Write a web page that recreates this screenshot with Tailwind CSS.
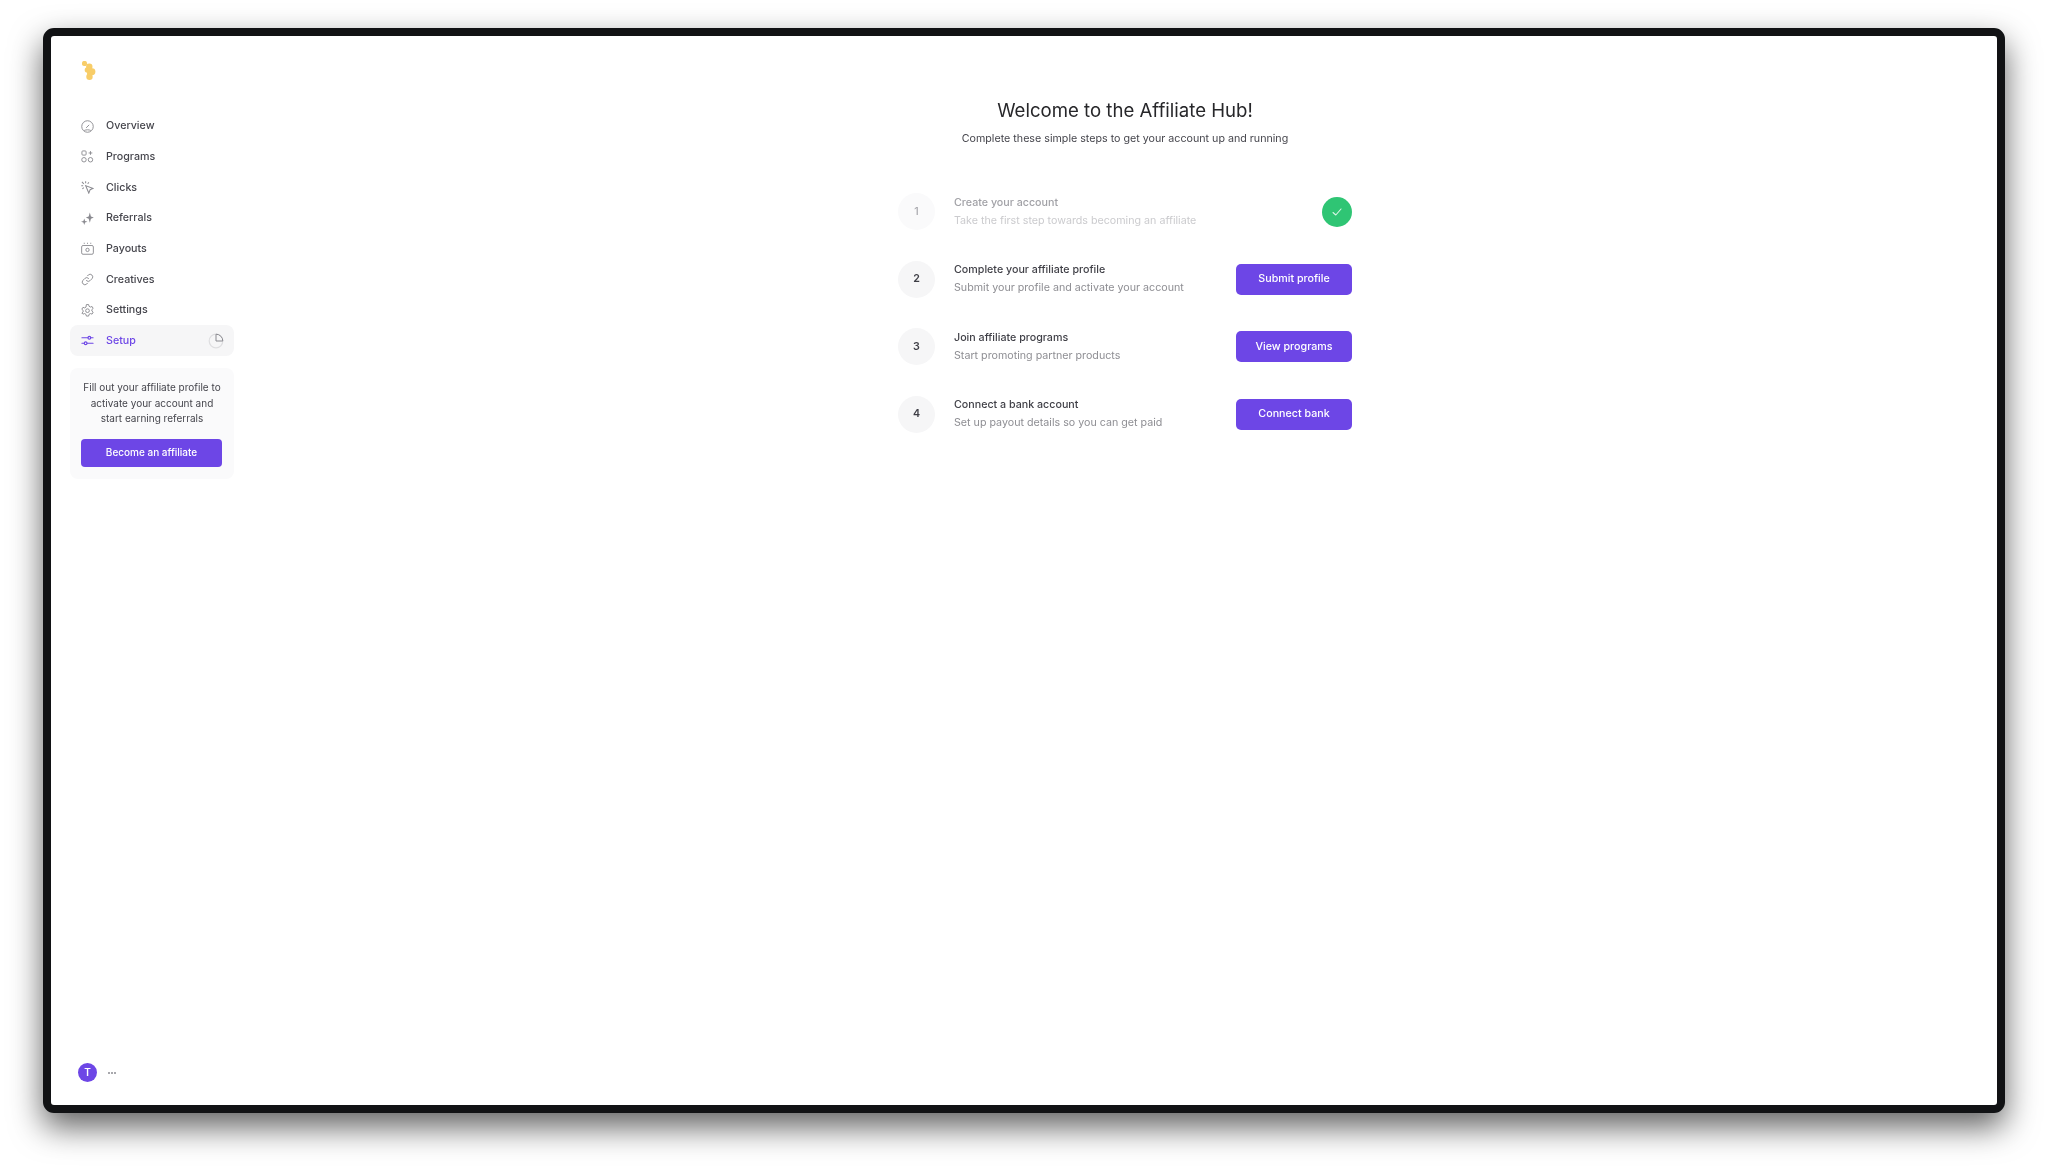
<!DOCTYPE html>
<html lang="en">
<head>
  <meta charset="UTF-8">
  <title>Affiliate Hub</title>
  <script src="https://cdn.jsdelivr.net/npm/@tailwindcss/browser@4"></script>
</head>
<body class="bg-white font-['Inter',sans-serif] overflow-hidden">
  <div class="h-[1170px] pt-[28px] pl-[43px]">
    <div class="w-[1962px] h-[1085px] flex bg-white border-8 border-[#111214] rounded-[11px] shadow-[0_14px_32px_rgba(0,0,0,0.62)]">
      <!-- sidebar -->
      <aside class="w-[202px] shrink-0 flex flex-col justify-between pl-[19px] pr-[19px] pt-[25px] pb-[23px] blur-[0.35px]">
        <div>
          <div class="pl-[12px] h-[19px]">
            <svg width="15" height="20" viewBox="0 0 15 20"><g fill="#f8cd68"><circle cx="2.5" cy="2.5" r="2.6"/><circle cx="7.3" cy="5.7" r="3.2"/><circle cx="10" cy="10.7" r="3.4"/><circle cx="5.5" cy="9" r="2.8"/><circle cx="7.5" cy="15.7" r="3.2"/><circle cx="8" cy="12" r="3"/></g></svg>
          </div>
          <nav class="mt-[31px] flex flex-col text-[10.7px] font-medium text-[#45454c]">
            <a class="h-[30.65px] flex items-center gap-[12px] pl-[11px]">
              <svg class="w-[13px] h-[13px]" viewBox="0 0 14 14" fill="none" stroke="#8a8a90" stroke-width="1"><circle cx="7" cy="7" r="6.2"/><path d="M5.5 8.5 8.8 5.2M3.5 11.3c2-1 5-1 7 0"/></svg>
              Overview
            </a>
            <a class="h-[30.65px] flex items-center gap-[12px] pl-[11px]">
              <svg class="w-[13px] h-[13px]" viewBox="0 0 14 14" fill="none" stroke="#8a8a90" stroke-width="1"><rect x="1" y="1" width="4.5" height="4.5" rx="1"/><path d="M10.2 1.2v4M8.2 3.2h4"/><circle cx="3.2" cy="10.5" r="2.4"/><circle cx="10.2" cy="10.5" r="2.4"/></svg>
              Programs
            </a>
            <a class="h-[30.65px] flex items-center gap-[12px] pl-[11px]">
              <svg class="w-[13px] h-[13px]" viewBox="0 0 14 14" fill="none" stroke="#8a8a90" stroke-width="1.1"><path d="M5 5l8 3-3.2 1.4L8.4 13z"/><path d="M1 1l2 2M5 .3v2M.3 5h2M1.5 8.5l1.5-1.3M8.5 1.5 7.2 3"/></svg>
              Clicks
            </a>
            <a class="h-[30.65px] flex items-center gap-[12px] pl-[11px]">
              <svg class="w-[13px] h-[13px]" viewBox="0 0 14 14" fill="#8a8a90"><path d="M9.5.5 10.7 4.8 13.8 6 10.7 7.2 9.5 11.5 8.3 7.2 5.2 6 8.3 4.8z"/><path d="M3.5 7 4.4 9.6 7 10.5 4.4 11.4 3.5 14 2.6 11.4 0 10.5 2.6 9.6z"/></svg>
              Referrals
            </a>
            <a class="h-[30.65px] flex items-center gap-[12px] pl-[11px]">
              <svg class="w-[13px] h-[13px]" viewBox="0 0 14 14" fill="none" stroke="#8a8a90" stroke-width="1"><rect x=".7" y="3.8" width="12.6" height="9.4" rx="1.5"/><circle cx="7" cy="8.5" r="1.8"/><path d="M3.5.8V2M7 .8V2M10.5.8V2"/></svg>
              Payouts
            </a>
            <a class="h-[30.65px] flex items-center gap-[12px] pl-[11px]">
              <svg class="w-[13px] h-[13px]" viewBox="0 0 14 14" fill="none" stroke="#8a8a90" stroke-width="1" stroke-linecap="round"><path d="M5.8 8.2a2.8 2.8 0 0 0 4 0l2-2a2.8 2.8 0 0 0-4-4l-.8.8"/><path d="M8.2 5.8a2.8 2.8 0 0 0-4 0l-2 2a2.8 2.8 0 0 0 4 4l.8-.8"/></svg>
              Creatives
            </a>
            <a class="h-[30.65px] flex items-center gap-[12px] pl-[11px]">
              <svg class="w-[13px] h-[13px]" viewBox="0 0 14 14" fill="none" stroke="#8a8a90" stroke-width="1"><path d="M5.8.6h2.4l.4 1.8 1.5.9 1.8-.6 1.2 2.1-1.4 1.2v1.6l1.4 1.2-1.2 2.1-1.8-.6-1.5.9-.4 1.8H5.8l-.4-1.8-1.5-.9-1.8.6L.9 9.7l1.4-1.2V6.9L.9 5.7 2.1 3.6l1.8.6 1.5-.9z"/><circle cx="7" cy="7.2" r="2"/></svg>
              Settings
            </a>
            <a class="h-[30.65px] flex items-center gap-[12px] pl-[11px] pr-[10px] bg-[#f6f6f7] rounded-lg text-[#6d46e6]">
              <svg class="w-[13px] h-[13px]" viewBox="0 0 14 14" fill="none" stroke="#6d46e6" stroke-width="1.2" stroke-linecap="round"><path d="M1 4h6.5M10.5 4H13M1 10h2.5M6.5 10H13"/><circle cx="9" cy="4" r="1.5"/><circle cx="5" cy="10" r="1.5"/></svg>
              Setup
              <svg class="ml-auto" width="16" height="16" viewBox="0 0 16 16" fill="none"><circle cx="8" cy="8" r="6.8" stroke="#dedee0" stroke-width="1.2"/><path d="M8 1.2A6.8 6.8 0 0 1 14.8 8H8z" fill="#f6f6f7" stroke="#8a8a90" stroke-width="1"/></svg>
            </a>
          </nav>
          <div class="mt-[11.5px] h-[111px] bg-[#fafafb] rounded-lg px-[10px] pt-[12.5px]">
            <p class="text-[10px] leading-[15.6px] text-center text-[#45454c]">Fill out your affiliate profile to activate your account and start earning referrals</p>
            <button class="mt-[12px] ml-px w-[141px] h-[28px] bg-[#6d46e6] rounded-[4px] text-[10px] font-medium text-white">Become an affiliate</button>
          </div>
        </div>
        <div class="flex items-center gap-[11px] pl-[8px]">
          <div class="w-[19px] h-[19px] rounded-full bg-[#6d46e6] flex items-center justify-center text-[10px] font-semibold text-white">T</div>
          <div class="flex gap-[1px]">
            <span class="w-[2px] h-[2px] bg-[#a8a8ad]"></span>
            <span class="w-[2px] h-[2px] bg-[#a8a8ad]"></span>
            <span class="w-[2px] h-[2px] bg-[#a8a8ad]"></span>
          </div>
        </div>
      </aside>
      <!-- main -->
      <main class="flex-1 flex flex-col items-center pt-[62px] blur-[0.35px]">
        <h1 class="text-[18.6px] leading-6 font-normal text-[#27272a]">Welcome to the Affiliate Hub!</h1>
        <p class="mt-[8.5px] text-[10.7px] leading-4 text-[#45454c]">Complete these simple steps to get your account up and running</p>
        <div class="w-[454px] mt-[31.5px] flex flex-col">
          <div class="h-[67.5px] flex items-center gap-[19px]">
            <div class="w-[37px] h-[37px] rounded-full bg-[#fafafb] flex items-center justify-center text-[10.7px] font-medium text-[#a8a8ad]">1</div>
            <div class="flex-1">
              <div class="text-[10.7px] leading-[18px] font-medium text-[#a1a1a6]">Create your account</div>
              <div class="text-[10.7px] leading-[18.5px] text-[#cbcbce]">Take the first step towards becoming an affiliate</div>
            </div>
            <div class="w-[30px] h-[30px] rounded-full bg-[#2fc574] flex items-center justify-center">
              <svg width="12" height="12" viewBox="0 0 12 12" fill="none" stroke="#d9f5e5" stroke-width="1.1" stroke-linecap="round" stroke-linejoin="round"><path d="M2 6.5 4.8 9 10 3"/></svg>
            </div>
          </div>
          <div class="h-[67.5px] flex items-center gap-[19px]">
            <div class="w-[37px] h-[37px] rounded-full bg-[#f6f6f7] flex items-center justify-center text-[10.7px] font-semibold text-[#3f3f46]">2</div>
            <div class="flex-1">
              <div class="text-[10.7px] leading-[18px] font-medium text-[#3f3f46]">Complete your affiliate profile</div>
              <div class="text-[10.7px] leading-[18.5px] text-[#8e8e93]">Submit your profile and activate your account</div>
            </div>
            <button class="w-[116px] h-[31px] bg-[#6d46e6] rounded-[5px] text-[10.7px] font-medium text-white">Submit profile</button>
          </div>
          <div class="h-[67.5px] flex items-center gap-[19px]">
            <div class="w-[37px] h-[37px] rounded-full bg-[#f6f6f7] flex items-center justify-center text-[10.7px] font-semibold text-[#3f3f46]">3</div>
            <div class="flex-1">
              <div class="text-[10.7px] leading-[18px] font-medium text-[#3f3f46]">Join affiliate programs</div>
              <div class="text-[10.7px] leading-[18.5px] text-[#8e8e93]">Start promoting partner products</div>
            </div>
            <button class="w-[116px] h-[31px] bg-[#6d46e6] rounded-[5px] text-[10.7px] font-medium text-white">View programs</button>
          </div>
          <div class="h-[67.5px] flex items-center gap-[19px]">
            <div class="w-[37px] h-[37px] rounded-full bg-[#f6f6f7] flex items-center justify-center text-[10.7px] font-semibold text-[#3f3f46]">4</div>
            <div class="flex-1">
              <div class="text-[10.7px] leading-[18px] font-medium text-[#3f3f46]">Connect a bank account</div>
              <div class="text-[10.7px] leading-[18.5px] text-[#8e8e93]">Set up payout details so you can get paid</div>
            </div>
            <button class="w-[116px] h-[31px] bg-[#6d46e6] rounded-[5px] text-[10.7px] font-medium text-white">Connect bank</button>
          </div>
        </div>
      </main>
    </div>
  </div>
</body>
</html>
